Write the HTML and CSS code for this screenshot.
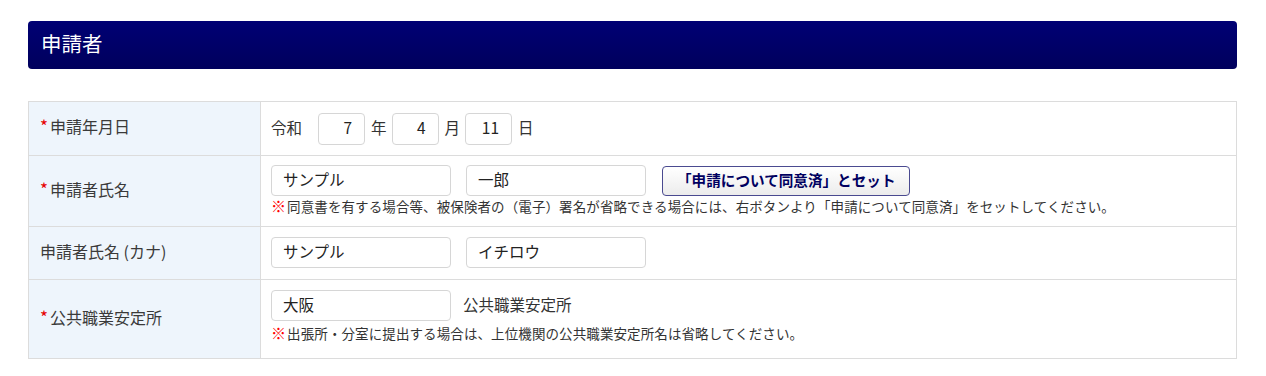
FILE: index.html
```html
<!DOCTYPE html>
<html lang="ja">
<head>
<meta charset="utf-8">
<title>申請者</title>
<link rel="stylesheet" href="styles.css">
</head>
<body>
<div class="page">
  <h2 class="section-title">申請者</h2>
  <table class="form-table">
    <tr class="row-date">
      <th><span class="req">*</span>申請年月日</th>
      <td>
        <div class="line">
          <span class="era">令和</span>
          <input class="num" type="text" value="7">
          <span class="unit">年</span>
          <input class="num" type="text" value="4">
          <span class="unit">月</span>
          <input class="num" type="text" value="11">
          <span class="unit">日</span>
        </div>
      </td>
    </tr>
    <tr class="row-name">
      <th><span class="req">*</span>申請者氏名</th>
      <td>
        <div class="line">
          <input class="txt" type="text" value="サンプル">
          <input class="txt" type="text" value="一郎">
          <button class="btn" type="button">「申請について同意済」とセット</button>
        </div>
        <p class="note note-tight"><span class="mark">※</span>同意書を有する場合等、被保険者の（電子）署名が省略できる場合には、右ボタンより「申請について同意済」をセットしてください。</p>
      </td>
    </tr>
    <tr class="row-kana">
      <th>申請者氏名 (カナ)</th>
      <td>
        <div class="line">
          <input class="txt" type="text" value="サンプル">
          <input class="txt" type="text" value="イチロウ">
        </div>
      </td>
    </tr>
    <tr class="row-office">
      <th><span class="req">*</span>公共職業安定所</th>
      <td>
        <div class="line">
          <input class="txt" type="text" value="大阪">
          <span class="suffix">公共職業安定所</span>
        </div>
        <p class="note"><span class="mark">※</span>出張所・分室に提出する場合は、上位機関の公共職業安定所名は省略してください。</p>
      </td>
    </tr>
  </table>
</div>
</body>
</html>
```
FILE: styles.css
```css
* { box-sizing: border-box; }
body {
  margin: 0;
  background: #fff;
  font-family: "Noto Sans CJK JP", "Noto Sans", sans-serif;
  color: #333;
}
.page {
  padding: 21px 29px 0 28px;
}
.section-title {
  margin: 0;
  height: 48px;
  border-radius: 4px;
  background: linear-gradient(#000074, #00005c);
  color: #fff;
  font-size: 20.5px;
  font-weight: normal;
  line-height: 44px;
  padding-left: 13px;
}
.form-table {
  margin-top: 32px;
  width: 100%;
  border-collapse: collapse;
  border: 1px solid #dcdcdc;
}
.form-table th,
.form-table td {
  border: 1px solid #dcdcdc;
  vertical-align: middle;
}
.form-table th {
  width: 232px;
  background: #eef5fc;
  text-align: left;
  font-weight: normal;
  font-size: 16px;
  padding: 0 0 5px 11px;
  color: #3a3a3a;
}
.form-table td {
  padding: 0 10px;
}
.row-date { height: 54px; }
.row-name { height: 71px; }
.row-name td { padding-bottom: 2px; }
.row-kana { height: 53px; }
.row-kana td { padding-bottom: 2px; }
.row-office { height: 79px; }
.row-office td { padding-bottom: 6px; }
.req {
  color: #e60000;
  display: inline-block;
  width: 10px;
  font-size: 17px;
  line-height: 1;
}
.line {
  display: flex;
  align-items: center;
}
.era { font-size: 15.5px; margin-right: 16px; padding-bottom: 4px; }
.unit { font-size: 15.5px; margin: 0 5px 0 6px; padding-bottom: 4px; }
input {
  font-family: inherit;
  font-size: 15.5px;
  color: #222;
  border: 1px solid #d6d6d6;
  border-radius: 4px;
  background: #fff;
  outline: none;
}
.num {
  width: 47px;
  height: 32px;
  text-align: right;
  padding: 0 12px 3px 4px;
}
.txt {
  width: 180px;
  height: 31px;
  padding: 0 11px 3px;
  margin-right: 15px;
}
.btn {
  font-family: inherit;
  font-size: 14.6px;
  font-weight: bold;
  color: #000060;
  height: 30px;
  padding: 0 14px 2px;
  margin-left: 1px;
  border: 1px solid #4a4a90;
  border-radius: 4px;
  background: linear-gradient(#ffffff, #ececec);
}
.suffix { font-size: 15.5px; margin-left: -3px; padding-bottom: 4px; }
.note {
  margin: 3px 0 0;
  font-size: 13.5px;
  letter-spacing: 0.1px;
  line-height: 18px;
  color: #333;
}
.note-tight { margin-top: 1px; }
.mark {
  color: #ff0000;
  font-weight: bold;
  font-size: 15px;
  margin-right: 1px;
}
```
